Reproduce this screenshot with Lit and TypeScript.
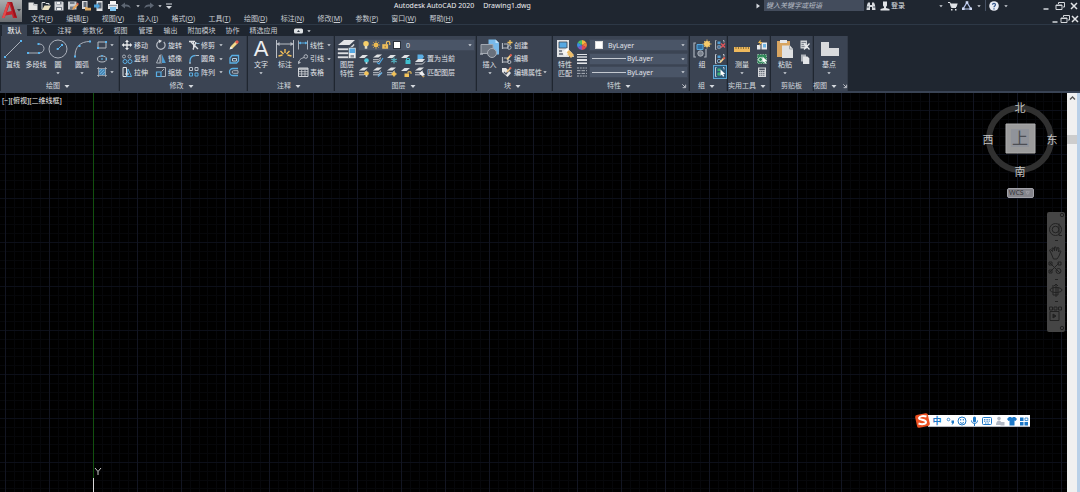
import { LitElement, html, svg, css, nothing } from "lit";
import { customElement, state } from "lit/decorators.js";
import { classMap } from "lit/directives/class-map.js";

/* Small glyphs, drawn on a 12 x 12 board. */
const small: Record<string, unknown> = {
  caret: svg`<path d="M3.500 5h5L6 8z" fill="#d5d9df"/>`,
  newFile: svg`<path d="M1.500 2.500h5l1 1.500h3V10h-9z" fill="#e4e4e4"/><path d="M6.500 2.500V5H10" stroke="#8b9099" fill="none" stroke-width=".7"/>`,
  open: svg`<path d="M2 9.500V2.500h3l1 1h3V5" fill="none" stroke="#d9dbde"/><path d="M2 10l2.500-4.500H11L8.500 10z" fill="#e9dfbf"/>`,
  save: svg`<path d="M1.500 1.500h8l1 1v8h-9z" fill="#d4d6da"/><path d="M3.500 1.500h5v3h-5zM3 7h6v3.500H3z" fill="#79808b"/><path d="M4 2h3v2H4zM4 8h4v2H4z" fill="#f2f2f2"/>`,
  saveAs: svg`<path d="M1 1.500h8.500v8H1z" fill="#c9ccd1"/><path d="M3 1.500h4.500v2.500H3zM3 6.500h5v3H3z" fill="#747b86"/><path d="M5 10l1-2.500 4-4 1.500 1.500-4 4z" fill="#e8a25a"/><path d="M9.500 3.500l1-1L12 4l-1 1z" fill="#dd5750"/>`,
  mobileOpen: svg`<path d="M2 1h5.500v8H2z" fill="#d8d9dc"/><path d="M3.500 2h3v5h-3z" fill="#646c78"/><path d="M5 10.500V7h2l.5.800H11v2.700z" fill="#dca862"/>`,
  mobileSave: svg`<path d="M3.500 1h6v10h-6z" fill="#dfe1e4"/><path d="M5 2.500h3.500v6H5z" fill="#5b6674"/><path d="M1 4.500h3V3l3 3-3 3V7.500H1z" fill="#4ea3dc"/>`,
  print: svg`<path d="M3 1h6v3H3z" fill="#f4f4f4"/><path d="M1 4h10v5H1z" fill="#dfe2e6"/><path d="M3 7h6v4H3z" fill="#7fc2ee"/><path d="M2 5h8v1H2z" fill="#949ba6"/>`,
  undo: svg`<path d="M1 5.500L5 2.500v2c4 0 5.500 1.500 5.500 4C9.500 7 8 6.600 5 6.600v2z" fill="#5d6673"/>`,
  redo: svg`<path d="M11 5.500L7 2.500v2c-4 0-5.500 1.500-5.500 4C2.500 7 4 6.600 7 6.600v2z" fill="#5d6673"/>`,
  more: svg`<path d="M3 3.500h6v1H3zM3 6h6L6 9z" fill="#d5d9df"/>`,
  play: svg`<path d="M4.500 3.500v5L8 6z" fill="#d5d9df"/>`,
  binoculars: svg`<path d="M2 5l1-2.500h2V5h2V2.500h2L10 5l.5 5H7V7H5v3H1.500z" fill="#d7dade"/><path d="M3 6v2M9 6v2" stroke="#4f5865"/>`,
  person: svg`<path d="M4 1.500h4v4L7 7v1l3.500 1v1.500h-9V9L5 8V7L4 5.500z" fill="#e2e4e7"/>`,
  cart: svg`<path d="M1 2.500h2l1.500 5H9" fill="none" stroke="#dfe2e6"/><path d="M3.200 3.500h7.500L9.500 7H4.500z" fill="#dfe2e6"/><path d="M4 9h1.500v1.500H4zM8 9h1.500v1.500H8z" fill="#dfe2e6"/>`,
  apps: svg`<path d="M6 2.500L10 9H2z" fill="none" stroke="#b3c3ea" stroke-width="1.200"/><path d="M4.700 1.200h2.600v2.600H4.700zM1 7.500h2.600V10H1zM8.500 7.500H11V10H8.500z" fill="#cdd8f2"/>`,
  help: svg`<circle cx="6" cy="6" r="4.800" fill="#e9edf4"/><path d="M4.500 4.800c0-2 3-2 3 0C7.500 6 6 6 6 7.300M6 8.200v1.200" stroke="#35598f" stroke-width="1.200" fill="none"/>`,
  min: svg`<path d="M3.500 9h5" stroke="#d5d8dc" stroke-width="1.500"/>`,
  restore: svg`<path d="M4.500 4V2.500h6v4.500H9M2 5h6v4.500H2z" fill="none" stroke="#d5d8dc"/><path d="M2 5.500h6" stroke="#d5d8dc"/>`,
  close: svg`<path d="M3 3l6 6M9 3l-6 6" stroke="#e1e3e6" stroke-width="1.500"/>`,
  ribbonMode: svg`<rect x="1" y="3.500" width="9" height="5" rx="1.500" fill="#dfe2e5"/><path d="M4 7l1.500-2L7 7z" fill="#333c48"/>`,
  rect: svg`<path d="M2 3h8v6H2z" fill="none" stroke="#b5bac2"/><path d="M1 8h2v2H1zM9 2h2v2H9z" fill="#59b4ef"/>`,
  ellipse: svg`<ellipse cx="6" cy="6" rx="4.500" ry="3" fill="none" stroke="#b5bac2"/><path d="M5.200 5.200h1.600v1.600H5.200zM9.500 5.200H11v1.600H9.500zM5.200 2h1.600v1.500H5.200z" fill="#59b4ef"/>`,
  hatch: svg`<path d="M3 3h6.500v6H3z" fill="#4787b5"/><path d="M2.500 1v10M9.500 1v10M1 2.500h10M1 9.500h10" stroke="#b5bac2" stroke-width=".7"/><path d="M4 8l4-4M3 6l3-3M6 9l3-3" stroke="#8cc8ee" stroke-width=".6"/>`,
  move: svg`<path d="M6 2v8M2 6h8" stroke="#e8eaed" stroke-width="1.300"/><path d="M6 .7L8 3H4zM6 11.300L8 9H4zM.7 6L3 4v4zM11.300 6L9 4v4z" fill="#e8eaed"/>`,
  rotate: svg`<path d="M8.800 3a4.200 4.200 0 1 1-4.500-.800" fill="none" stroke="#b8bdc6" stroke-width="1.200"/><path d="M3.500.500l3.500 1.300-2.600 2.500z" fill="#d8dbe0"/>`,
  trim: svg`<path d="M1 2.500h6" stroke="#dfe2e6" stroke-width="1.500"/><path d="M3 3l7 7M8 3L5 10.500" stroke="#dfe2e6" stroke-width="1.400"/><path d="M5.500 2v8.500" stroke="#dfe2e6"/><path d="M8 4.500h3.500" stroke="#8bb5d0"/>`,
  pencil: svg`<path d="M2 10l1-3 5-5 2 2-5 5z" fill="#f2d789"/><path d="M7 3l2-2 2 2-2 2z" fill="#e25a4e"/><path d="M1.500 10.500l1-3L5 9.500z" fill="#f1f1f1"/>`,
  copy: svg`<circle cx="3" cy="3.500" r="1.500" fill="none" stroke="#a9b0ba"/><circle cx="8.500" cy="3.500" r="1.500" fill="none" stroke="#a9b0ba"/><circle cx="4" cy="8.500" r="2" fill="none" stroke="#59aee4"/><circle cx="9" cy="8.500" r="2" fill="none" stroke="#59aee4"/>`,
  mirror: svg`<path d="M5 2v8H1.500z" fill="none" stroke="#a9b0ba"/><path d="M7 1.500L10.800 10H7z" fill="#4c9bd0"/><path d="M6 1v10" stroke="#dfe2e6" stroke-width=".5"/>`,
  fillet: svg`<path d="M2 10.500V8c0-3.500 2-5.500 5.500-5.500" fill="none" stroke="#59aee4" stroke-width="1.300"/><path d="M2 11V9M7.500 2.500H11" stroke="#b5bac2"/>`,
  explode: svg`<path d="M2 5l2-2.500h6.500V8L8.500 10H2z" fill="none" stroke="#59aee4" stroke-width="1.300"/><path d="M4.500 5.500h4V8h-4z" fill="none" stroke="#b5cfe2"/>`,
  stretch: svg`<path d="M2 1.500h3.500v9H2z" fill="none" stroke="#dfe2e6"/><path d="M7 3l3.500 7.500H6z" fill="none" stroke="#59aee4"/><path d="M4 8h4" stroke="#dfe2e6"/>`,
  scale: svg`<path d="M1.500 2V1.500h9v9H6" fill="none" stroke="#a9b0ba"/><path d="M1.500 6h4.500v4.500H1.500z" fill="none" stroke="#59aee4" stroke-width="1.200"/><path d="M6.500 5.500L9 3" stroke="#a9b0ba"/>`,
  array: svg`<path d="M1.500 1.500h3v3h-3zM7 1.500h3v3H7z" fill="none" stroke="#b9c0ca"/><path d="M1.500 7h3v3h-3zM7 7h3v3H7z" fill="none" stroke="#59aee4"/>`,
  offset: svg`<path d="M10 2.500H5a3.500 3.500 0 0 0 0 7h5" fill="none" stroke="#59aee4" stroke-width="1.300"/><path d="M10 4.700H5.500a1.300 1.300 0 0 0 0 2.600H10z" fill="none" stroke="#a9b0ba"/>`,
  linear: svg`<path d="M1.500 1.500v9M10.500 1.500v9" stroke="#a9b0ba"/><path d="M2 4h8" stroke="#59aee4"/><path d="M1.700 4l2.300-1.500v3zM10.300 4L8 2.500v3z" fill="#59aee4"/>`,
  leader: svg`<path d="M1.500 10.500c1-5 3-5 5.500-6" fill="none" stroke="#b5bac2"/><path d="M1 8l.2 3.200L4 9.500z" fill="#b5bac2"/><circle cx="8.800" cy="3.500" r="1.800" fill="none" stroke="#b5bac2"/>`,
  table: svg`<path d="M1.500 2h9.500v8.500H1.500z" fill="none" stroke="#d0d3d8"/><path d="M1.500 3h9.500" stroke="#d0d3d8" stroke-width="1.500"/><path d="M1.500 5.700H11M1.500 8H11M4.700 4v6M8 4v6" stroke="#d0d3d8" stroke-width=".8"/>`,
  bulb: svg`<circle cx="6" cy="4.500" r="3.300" fill="#f6cf6a"/><path d="M4.500 7h3v3.500h-3z" fill="#e3dcc4"/>`,
  sun: svg`<circle cx="6" cy="6" r="2.800" fill="#f6c555"/><path d="M6 1v10M1 6h10M2.600 2.600l6.800 6.800M9.400 2.600L2.600 9.400" stroke="#e6b451" stroke-width=".9"/>`,
  unlock: svg`<path d="M1.500 5h7v5.500h-7z" fill="#f0bf5c"/><path d="M6.500 5.500v-2a2 2 0 0 1 4 0v2.500" fill="none" stroke="#f0bf5c" stroke-width="1.400"/><path d="M5 7v2" stroke="#735a2b"/>`,
  insertSmall: svg`<path d="M1.500 4v6M1 9h6M3 5h4v4" fill="none" stroke="#b5bac2" stroke-width="1.200"/><circle cx="8.300" cy="8.500" r="1.800" fill="none" stroke="#b5bac2"/><path d="M9 1v5M6.500 3.500h5" stroke="#f0c15e" stroke-width="1.300"/>`,
  editBlock: svg`<path d="M1.500 4v6M1 9h6M3 5h4v4" fill="none" stroke="#b5bac2" stroke-width="1.200"/><circle cx="8.300" cy="9" r="1.600" fill="none" stroke="#b5bac2"/><path d="M6 6.500l4-4.500" stroke="#f0d08a" stroke-width="1.800"/><path d="M9 3l1.500-1.700" stroke="#e25a4e" stroke-width="2"/>`,
  editAttr: svg`<path d="M1 2h4l5 5-3.500 4L1 6z" fill="#e6e6e6"/><path d="M3 6l2 2 5-6" fill="none" stroke="#4a5261" stroke-width="1.200"/><path d="M6 6l3.500-4" stroke="#e9c07e" stroke-width="1.600"/><path d="M9 2.500l1-1.200" stroke="#e25a4e" stroke-width="2"/>`,
  wheel: svg`<path d="M6 6V1a5 5 0 0 1 4.300 2.500z" fill="#f4b63e"/><path d="M6 6l4.300-2.500a5 5 0 0 1 0 5z" fill="#ef7a3a"/><path d="M6 6l4.300 2.500A5 5 0 0 1 6 11z" fill="#dd4a54"/><path d="M6 6v5a5 5 0 0 1-4.300-2.500z" fill="#8457c4"/><path d="M6 6L1.700 8.500a5 5 0 0 1 0-5z" fill="#3a8fe0"/><path d="M6 6L1.700 3.500A5 5 0 0 1 6 1z" fill="#4cbf63"/>`,
  weights: svg`<path d="M1 1.500h10" stroke="#e2e4e7"/><path d="M1 4h10" stroke="#e2e4e7" stroke-width="1.400"/><path d="M1 7h10" stroke="#e2e4e7" stroke-width="2"/><path d="M1 10.200h10" stroke="#e2e4e7" stroke-width="1.600"/>`,
  dashes: svg`<path d="M1 2h10M1 10h10" stroke="#aab0b9" stroke-dasharray="2 .8"/><path d="M1 4.700h10M1 7.400h10" stroke="#aab0b9" stroke-dasharray="3.500 1"/>`,
  ungroup: svg`<path d="M2.500 1.500H1.500v9h1M9 1.500h1v2" fill="none" stroke="#a9b0ba"/><circle cx="5" cy="8" r="1.800" fill="#4a78a0" stroke="#a9b0ba" stroke-width=".6"/><path d="M3.500 2.500h3v2.500h-3z" fill="#4f9ed6"/><path d="M7 4.500l4 4M11 4.500l-4 4" stroke="#e0555a" stroke-width="1.400"/>`,
  groupEdit: svg`<path d="M2.500 1.500H1.500v9h1M9 1.500h1v2" fill="none" stroke="#c5cad2"/><path d="M3.500 2.500h3v2.500h-3z" fill="#4f9ed6"/><circle cx="5" cy="8" r="1.700" fill="none" stroke="#7fa7c6"/><path d="M6 9.500L10 5" stroke="#f0cf8d" stroke-width="1.800"/><path d="M9.300 6L10.800 4.300" stroke="#e25a4e" stroke-width="1.800"/>`,
  groupSelect: svg`<path d="M2.500 1.500H1.500v9h1M9 1.500h1v2" fill="none" stroke="#c5cad2"/><path d="M3.500 2.500h3v2.500h-3z" fill="#3fae74"/><circle cx="5" cy="8" r="1.800" fill="#3fae74"/><path d="M6.500 3.500v6.200l1.500-1.200 1 2.200 1.200-.6-1-2.100h2z" fill="#fff"/>`,
  quickCalc: svg`<path d="M2 1.500h8v9.500H2z" fill="#d7d9dc"/><path d="M3.200 2.500h5.600v1.700H3.200z" fill="#4a5261"/><path d="M3.200 5.500h5.600M3.200 7.300h5.600M3.200 9.200h5.600" stroke="#4a5261" stroke-dasharray="1.200 .8"/>`,
  quickSelect: svg`<path d="M5.500 3.500h5.500v7H5.500z" fill="#e8eaed"/><path d="M7 5h3v3.500H7z" fill="#6db5e6"/><path d="M1 6h3.500v4.500H1z" fill="#e8eaed"/><path d="M4.500.500L2 4h2l-1 3 3.500-4h-2z" fill="#f4bd4d"/>`,
  selectAll: svg`<path d="M1.500 1.500h9v9h-9z" fill="#2f8a5a" stroke="#a7c9b6" stroke-width=".7" stroke-dasharray="1.500 1"/><circle cx="4.500" cy="6.500" r="2" fill="none" stroke="#d7e6dd"/><path d="M6.500 3.500v6.200l1.500-1.200 1 2.200 1.200-.6-1-2.100h2z" fill="#fff"/>`,
  cut: svg`<path d="M1.500 1.500h6.500v8h-6.500z" fill="#cfd2d6"/><path d="M2.500 3.500h4.500M2.500 5.500h4.500M2.500 7.500h3" stroke="#68707c" stroke-width=".8"/><path d="M5 4.500l5.500 6M10.500 4.500L5 10.500" stroke="#eef0f2" stroke-width="1.200"/>`,
  copyClip: svg`<path d="M2 1.500h5v7H2z" fill="#aeb3ba"/><path d="M4 3.500h4.500l1.800 1.800V11H4z" fill="#e3e5e8"/>`,
  launcher: svg`<path d="M3.500 3.500l4 4M8.500 4v4.500H4" fill="none" stroke="#cfd3d9" stroke-width="1.300"/>`,
};

/* Stack of sheets used by the layer tools; the accent glyph sits at its lower right. */
const sheets = svg`<path d="M1 4.500L5 1.500h5L6.500 4.500z" fill="#dfe1e4"/><path d="M1 6.700h5.500L9 4.700M1 8.800h5L8.500 7" fill="none" stroke="#c3c7cd"/>`;
const sheet = svg`<path d="M1 5l3.500-3H10L6.500 5z" fill="#dfe1e4"/>`;
const dot = (c: string) => svg`<circle cx="8.500" cy="7.500" r="2.300" fill=${c}/><path d="M7.700 9h1.600v2H7.700z" fill="#c9ced4"/>`;
Object.assign(small, {
  layOff: svg`${sheet}${dot("#4cc5d8")}`,
  layIso: svg`${sheets}<path d="M5 9.500l2 1.500 4-6" fill="none" stroke="#4fa7e0" stroke-width="1.200"/>`,
  layFreeze: svg`${sheet}<path d="M8 4.500v6M5.300 6l5.400 3M10.700 6L5.300 9" stroke="#56b5c4" stroke-width="1.200"/>`,
  layLock: svg`${sheet}<path d="M5.500 7h5v4h-5z" fill="#3fc0cf"/><path d="M6.500 7V5.500h3V7" fill="none" stroke="#3fc0cf"/>`,
  layCurrent: svg`<path d="M1 9l3-3h7L8.500 9z" fill="#dfe1e4"/><path d="M1 11h7.500l2.500-2.500" fill="none" stroke="#c3c7cd"/><path d="M3.500 1.500h5l1.500 2-1.500 2.500h-5z" fill="#5aaee4"/>`,
  layOn: svg`${sheets}${dot("#f4c45a")}`,
  layUniso: svg`${sheets}<path d="M6 10.500l4-4" stroke="#6fb4e4" stroke-width="1.500"/>`,
  layThaw: svg`${sheets}<circle cx="8" cy="8" r="2" fill="#f4c45a"/><path d="M8 5v6M5 8h6" stroke="#f4c45a" stroke-width=".8"/>`,
  layUnlock: svg`${sheet}<path d="M4.500 7.500h4.500V11H4.500z" fill="#f4c45a"/><path d="M8 7.500V5.800h3V8" fill="none" stroke="#f4c45a"/>`,
  layMatch: svg`${sheets}<path d="M5 7l3 3 3-1-3-4z" fill="#f0f0f0"/><path d="M8 10l1 1.500 2-1z" fill="#e9b45d"/>`,
});

/* Large glyphs, drawn on a 22 x 22 board. */
const large: Record<string, unknown> = {
  line: svg`<path d="M3 19L19 3" stroke="#aab0ba"/><path d="M2 18h2v2H2zM18 2h2v2h-2z" fill="#59b4ef"/>`,
  pline: svg`<path d="M2.500 15h12a4.500 4.500 0 0 0 0-9H13" fill="none" stroke="#aab0ba"/><path d="M2 14h2v2H2zM13 14h2v2h-2zM12.500 5h2v2h-2z" fill="#59b4ef"/>`,
  circle: svg`<circle cx="11" cy="11" r="9" fill="none" stroke="#aab0ba"/><path d="M10.500 11.500L15 7" stroke="#59b4ef"/><path d="M9.700 10h2v2h-2zM14 6h2v2h-2z" fill="#59b4ef"/>`,
  arc: svg`<path d="M4 18.500C4 9 9 3.500 19 3.500" fill="none" stroke="#aab0ba"/><path d="M3 17.500h2v2H3zM7.500 7h2v2h-2zM18 2.500h2v2h-2z" fill="#59b4ef"/>`,
  dim: svg`<path d="M2.500 2v18M19.500 2v18M3 6h16" stroke="#b9bec6"/><path d="M2.500 6l3-2v4zM19.500 6l-3-2v4z" fill="#b9bec6"/><path d="M4.500 18l4-1M6.500 13l3 3M11 11v4M15.500 13l-3 3M17.500 18l-4-1" stroke="#f4bf59" stroke-width="1.400"/>`,
  layers: svg`<path d="M2 7L8 2h11l-5.500 5z" fill="#e4e5e7"/><path d="M2 10.500h11l5-4.500v1.500L13.500 12H2zM2 14.500h11l4-4v1.500l-4 4H2zM2 18.500h11v1.500H2z" fill="#dcdee1" stroke="#dcdee1" stroke-width=".4"/><path d="M12.500 9.500h7.500v11h-7.500z" fill="#e9ebed" stroke="#3b4453" stroke-width=".6"/><path d="M13.500 10.500h5.500v4.500h-5.500z" fill="#56a8e2"/><path d="M14.500 17h3.500v2.500h-3.500z" fill="#8b929d"/>`,
  insert: svg`<path d="M9.500 1.500h7L20 5v11.500H9.500z" fill="#78b9ea"/><path d="M16.500 1.500V5H20" fill="#c4e1f6"/><path d="M2 6.500h12v9H2z" fill="#6d7580" stroke="#a3a9b2"/><circle cx="13" cy="15" r="4.500" fill="#69717c" stroke="#a9afb8"/><path d="M1 16h3" stroke="#a9afb8" stroke-width="1.500"/>`,
  match: svg`<path d="M3 2h12v17H3z" fill="#e0e2e4"/><path d="M5 4h8v6H5z" fill="#56a8e2" stroke="#3e4653" stroke-width=".8"/><path d="M5 13h3M5 16h4" stroke="#5d6571" stroke-width="1.500"/><path d="M10 13l3-3 5 5 2 4-4-1z" fill="#fff"/><path d="M12 15l3-3 5 5-3 3z" fill="#edbd69"/><path d="M8 14l3-2 3 4-3 2z" fill="#f4f4f4"/>`,
  group: svg`<path d="M5 5H3v14h2M13 19h2v-8" fill="none" stroke="#a9b0ba" stroke-width="1.200"/><path d="M6 6.500h6v5H6z" fill="#316d9d" stroke="#58a9e0"/><circle cx="9.500" cy="15.500" r="2.700" fill="#79818d" stroke="#a9b0ba"/><circle cx="16" cy="6" r="3" fill="#f7cf6d"/><path d="M16 1.500v9M11.500 6h9M13 3l6 6M19 3l-6 6" stroke="#f4c668" stroke-width=".8"/>`,
  measure: svg`<path d="M3 9h16v5H3z" fill="#eeb95d"/><path d="M5 9v2M7.500 9v2M10 9v2M12.500 9v2M15 9v2M17.500 9v2" stroke="#7c622f" stroke-width=".8"/>`,
  paste: svg`<path d="M3 3h13v16H3z" fill="#d8a561"/><path d="M6 2h7v3H6z" fill="#e6e7e9"/><path d="M8 7.500h8L19 11v9H8z" fill="#dfe1e3"/><path d="M15.500 7.500V11H19" fill="none" stroke="#a0a5ac"/>`,
  base: svg`<path d="M3 4h8v6h10v8H3z" fill="#d9dadc"/>`,
};

const icon = (name: string, extra = "") =>
  html`<svg class="ico ${extra}" viewBox="0 0 12 12" aria-hidden="true">${small[name]}</svg>`;
const bigIcon = (name: string) =>
  name === "text"
    ? html`<span class="letter">A</span>`
    : html`<svg class="big-ico" viewBox="0 0 22 22" aria-hidden="true">${large[name]}</svg>`;

const MENUS: [string, string][] = [
  ["文件", "F"], ["编辑", "E"], ["视图", "V"], ["插入", "I"], ["格式", "O"], ["工具", "T"],
  ["绘图", "D"], ["标注", "N"], ["修改", "M"], ["参数", "P"], ["窗口", "W"], ["帮助", "H"],
];
const TABS = ["默认", "插入", "注释", "参数化", "视图", "管理", "输出", "附加模块", "协作", "精选应用"];

@customElement("app-root")
export class AppRoot extends LitElement {
  @state() private tab = "默认";

  static styles = css`
    :host {
      display: flex; flex-direction: column; height: 100vh; overflow: hidden;
      background: #1f2630; color: #e0e3e8;
      font: 7px/9px "Noto Sans", "Noto Sans CJK SC", sans-serif;
    }
    * { box-sizing: border-box; }
    button, input, select {
      font: inherit; color: inherit; background: none; border: 0; margin: 0; padding: 0;
      border-radius: 0; white-space: nowrap;
    }
    select { appearance: none; outline: none; }
    .ico { width: 12px; height: 12px; flex: none; display: block; }
    .caret { width: 8px; height: 8px; }
    .big-ico { width: 22px; height: 22px; display: block; }

    .head { display: flex; flex: none; height: 24px; }
    .logo {
      width: 22px; height: 22px; flex: none; display: flex;
      background: linear-gradient(#a9abad, #6c6f73);
    }
    .logo svg { width: 22px; height: 22px; }
    .bars { flex: 1; min-width: 0; }
    .title-bar { display: flex; align-items: center; height: 11px; }
    .quick { display: flex; align-items: center; padding-left: 4px; }
    .quick button { width: 13px; height: 11px; display: flex; justify-content: center; align-items: center; }
    .quick button.slim { width: 9px; }
    .quick button.wide { width: 14px; }
    .title { flex: 1; display: flex; justify-content: center; gap: 9px; font-size: 7px; color: #eceef1; white-space: pre; }
    .right { display: flex; align-items: center; }
    .right button { display: flex; align-items: center; height: 11px; }
    .search { width: 100px; height: 11px; background: #434c5c; padding: 0 2px; font-style: italic; outline: none; }
    .search::placeholder { color: #b8bec7; opacity: 1; }
    .account { gap: 2px; margin-left: 1px; }
    .login { width: 58px; }
    .tools { display: flex; align-items: center; gap: 2px; }
    .sep { width: 1px; height: 11px; background: #465163; }
    .wins { display: flex; gap: 2px; }
    .title-bar .wins { margin-left: 30px; }
    .menu-bar .wins { gap: 0; margin-left: auto; }
    .menu-bar .wins button { width: 10px; display: flex; justify-content: center; }
    .menu-bar { display: flex; align-items: center; height: 13px; padding-left: 9px; color: #c9cdd3; margin-top: 1px; }
    .menus { display: flex; justify-content: space-between; width: 422px; }
    u { text-underline-offset: 1px; text-decoration-thickness: 1px; }

    .tabs { display: flex; align-items: stretch; flex: none; height: 12px; padding-left: 2px; border-top: 1px solid #2d3846; color: #c9cdd3; }
    .tabs button { width: 25px; height: 11px; text-align: center; }
    .tabs .three { width: 31px; }
    .tabs .four { width: 37px; }
    .tabs .on { background: #3b4453; color: #fff; }
    .tabs .mode { display: flex; align-items: center; width: 31px; justify-content: flex-end; }

    .ribbon { display: flex; gap: 1px; flex: none; height: 57px; padding-left: 1px; border-bottom: 2px solid #394354; }
    .panel { display: flex; flex-direction: column; background: #3b4453; flex: none; border-right: 1px solid #333b48; }
    .body { display: flex; height: 44px; padding: 2px 0 0 1px; }
    .foot { display: flex; justify-content: center; align-items: center; height: 11px; color: #d5d9de; gap: 1px; }
    .foot .end { margin-left: auto; }
    .foot.spread::before { content: ""; margin-right: auto; width: 8px; }
    .foot button { display: flex; align-items: center; gap: 1px; }
    .big { width: 24px; height: 41px; display: flex; flex-direction: column; align-items: center; }
    .big.narrow { width: 20px; }
    .big.first { width: 22px; }
    .big.broad { width: 28px; }
    .letter { height: 22px; font: 22px/22px "Liberation Sans", sans-serif; color: #eceef0; }
    .grid { display: grid; grid-template-rows: 14px 13px 14px; align-items: center; justify-items: start; }
    .grid button { display: flex; align-items: center; gap: 1px; }
    .draw { grid-template-columns: 12px 8px; }
    .modify { grid-template-columns: 34px 33px 29px 11px 14px; }
    .annotate { grid-template-columns: 28px 8px; }
    .block { grid-template-columns: 40px 10px; }
    .single { grid-template-columns: 14px; justify-items: center; }
    .selected { background: #2d5878; outline: 1px solid #5aa6d6; }

    .p-draw { width: 118px; }
    .p-modify { width: 127px; }
    .p-annotate { width: 86px; }
    .p-layer { width: 141px; }
    .p-block { width: 75px; }
    .p-prop { width: 136px; }
    .p-group { width: 37px; }
    .p-util { width: 42px; }
    .p-clip { width: 42px; }
    .p-view { width: 34px; }
    .rows { display: grid; grid-template-rows: 14px 13px 14px; align-items: center; flex: 1; min-width: 0; }
    .tool-row { display: flex; gap: 2px; align-items: center; }
    .tool-row button { display: flex; align-items: center; gap: 1px; width: 12px; }
    .tool-row .labelled { width: auto; }
    .combo { display: flex; align-items: center; height: 12px; background: #4a5567; min-width: 0; border: 1px solid #3f4858; padding-left: 2px; }
    .combo select { flex: 1; min-width: 0; height: 10px; padding-left: 5px; }
    .combo .ico { width: 10px; height: 10px; }
    .combo .caret { width: 8px; }
    .swatch { width: 8px; height: 8px; background: #fff; border: 1px solid #2b323c; flex: none; margin-left: 2px; }
    .prop-row { display: flex; align-items: center; gap: 1px; }
    .prop-row .combo { flex: 1; }
    .prop-row .swatch { margin-left: 3px; border-color: #ddd; }
    .stroke { width: 34px; height: 1px; background: #c4c9d0; flex: none; }
    .combo .stroke + select { padding-left: 1px; }

    .work { position: relative; flex: 1; min-height: 0; display: flex; background: #000; }
    .canvas {
      position: relative; flex: 1; overflow: hidden; color: #f0f0f0;
      background-image:
        linear-gradient(90deg, #121521 1px, transparent 1px),
        linear-gradient(#0c0f19 1px, transparent 1px),
        linear-gradient(90deg, transparent 9px, #06070a 9px 10px, transparent 10px 18px, #06070a 18px 19px, transparent 19px 26px, #06070a 26px 27px, transparent 27px 35px, #06070a 35px 36px, transparent 36px),
        linear-gradient(transparent 9px, #06070a 9px 10px, transparent 10px 18px, #06070a 18px 19px, transparent 19px 26px, #06070a 26px 27px, transparent 27px 35px, #06070a 35px 36px, transparent 36px);
      background-size: 44px 44px;
      background-position: 5px 17px;
    }
    .view-label { padding: 3px 2px; }
    .axis { position: absolute; left: 93px; top: 0; bottom: 14px; width: 1px; background: #12500f; }
    .axis-base { position: absolute; left: 93px; bottom: 0; width: 1px; height: 14px; background: #d8d8d8; }
    .axis-name { position: absolute; left: 94px; bottom: 16px; width: 8px; height: 9px; }
    .compass { position: absolute; right: 8px; top: 4px; width: 78px; height: 88px; }
    .compass text { font: 11px "Noto Sans CJK SC", sans-serif; fill: #c2c2c2; text-anchor: middle; }
    .compass .up { font-size: 16px; fill: #4c4e54; }
    .wcs { position: absolute; right: 33px; top: 95px; width: 27px; height: 10px; border-radius: 2px; background: #85858c; color: #35353a; display: flex; align-items: center; justify-content: space-between; padding: 0 1px; border: 1px solid #a3a3aa; font: 7px/8px "Noto Sans", sans-serif; }
    .nav { position: absolute; right: 2px; top: 119px; width: 18px; height: 120px; }
    .scroll { width: 10px; background: #f0f0f0; display: flex; flex-direction: column; gap: 32px; }
    .scroll svg { width: 10px; height: 10px; }
    .thumb { height: 9px; background: #cdcdcd; }
    .edge { width: 3px; background: #b9d0e8; }
    .ime { position: absolute; right: 50px; bottom: 65px; height: 12px; width: 102px; background: #fff; display: flex; align-items: center; padding-left: 3px; color: #1d78c8; border-bottom: 1px solid #b9bdc4; }
    .ime svg { width: 100%; height: 12px; display: block; }
    .ime .zh { font: 700 9px/11px "Noto Sans CJK SC", sans-serif; width: 12px; flex: none; text-align: center; }
    .ime .badge { position: absolute; left: -14px; top: -3px; width: 17px; height: 17px; }
  `;

  private btn(name: string, label: string, cls = "") {
    return html`<button class=${cls} aria-label=${label}>${icon(name)}</button>`;
  }
  private more(label = "更多") {
    return html`<button aria-label=${label}>${icon("caret", "caret")}</button>`;
  }
  private tool(name: string, label: string) {
    return html`<button class="labelled">${icon(name)}<span>${label}</span></button>`;
  }
  private big(name: string, lines: string[], caret = false, cls = "") {
    return html`<button class="big ${cls}">
      ${bigIcon(name)}${lines.map((l) => html`<span>${l}</span>`)}${caret ? icon("caret", "caret") : nothing}
    </button>`;
  }
  private panel(cls: string, title: string, body: unknown, caret = true, launcher = false) {
    return html`<section class="panel ${cls}" aria-label=${title}>
      <div class="body">${body}</div>
      <div class="foot ${launcher ? "spread" : ""}">
        <button>${title}${caret ? icon("caret") : nothing}</button>
        ${launcher ? html`<button class="end" aria-label="设置">${icon("launcher", "caret")}</button>` : nothing}
      </div>
    </section>`;
  }

  private renderRibbon() {
    return html`<div class="ribbon">
      ${this.panel("p-draw", "绘图", html`
        ${this.big("line", ["直线"], false, "first")}${this.big("pline", ["多段线"])}
        ${this.big("circle", ["圆"], true, "narrow")}${this.big("arc", ["圆弧"], true, "broad")}
        <div class="grid draw">
          ${this.btn("rect", "矩形")}${this.more()}${this.btn("ellipse", "椭圆")}${this.more()}
          ${this.btn("hatch", "图案填充")}${this.more()}
        </div>`)}
      ${this.panel("p-modify", "修改", html`
        <div class="grid modify">
          ${this.tool("move", "移动")}${this.tool("rotate", "旋转")}${this.tool("trim", "修剪")}${this.more()}${this.btn("pencil", "删除")}
          ${this.tool("copy", "复制")}${this.tool("mirror", "镜像")}${this.tool("fillet", "圆角")}${this.more()}${this.btn("explode", "分解")}
          ${this.tool("stretch", "拉伸")}${this.tool("scale", "缩放")}${this.tool("array", "阵列")}${this.more()}${this.btn("offset", "偏移")}
        </div>`)}
      ${this.panel("p-annotate", "注释", html`
        ${this.big("text", ["文字"], true)}${this.big("dim", ["标注"])}
        <div class="grid annotate">
          ${this.tool("linear", "线性")}${this.more()}${this.tool("leader", "引线")}${this.more()}
          ${this.tool("table", "表格")}
        </div>`)}
      ${this.panel("p-layer", "图层", html`
        ${this.big("layers", ["图层", "特性"], false, "first")}
        <div class="rows">
          <div class="combo">
            ${icon("bulb")}${icon("sun")}${icon("unlock")}<span class="swatch"></span>
            <select aria-label="图层"><option>0</option></select>${icon("caret", "caret")}
          </div>
          <div class="tool-row">
            ${this.btn("layOff", "关")}${this.btn("layIso", "隔离")}${this.btn("layFreeze", "冻结")}${this.btn("layLock", "锁定")}
            ${this.tool("layCurrent", "置为当前")}
          </div>
          <div class="tool-row">
            ${this.btn("layOn", "打开")}${this.btn("layUniso", "取消隔离")}${this.btn("layThaw", "解冻")}${this.btn("layUnlock", "解锁")}
            ${this.tool("layMatch", "匹配图层")}
          </div>
        </div>`)}
      ${this.panel("p-block", "块", html`
        ${this.big("insert", ["插入"], true)}
        <div class="grid block">
          ${this.tool("insertSmall", "创建")}<span></span>${this.tool("editBlock", "编辑")}<span></span>
          ${this.tool("editAttr", "编辑属性")}${this.more()}
        </div>`)}
      ${this.panel("p-prop", "特性", html`
        ${this.big("match", ["特性", "匹配"], false, "first")}
        <div class="rows">
          <div class="prop-row">${icon("wheel")}
            <div class="combo"><span class="swatch"></span><select aria-label="颜色"><option>ByLayer</option></select>${icon("caret", "caret")}</div></div>
          <div class="prop-row">${icon("weights")}
            <div class="combo"><span class="stroke"></span><select aria-label="线宽"><option>ByLayer</option></select>${icon("caret", "caret")}</div></div>
          <div class="prop-row">${icon("dashes")}
            <div class="combo"><span class="stroke"></span><select aria-label="线型"><option>ByLayer</option></select>${icon("caret", "caret")}</div></div>
        </div>`, true, true)}
      ${this.panel("p-group", "组", html`
        ${this.big("group", ["组"], false, "first")}
        <div class="grid single">${this.btn("ungroup", "解除编组")}${this.btn("groupEdit", "组编辑")}${this.btn("groupSelect", "组选择", "selected")}</div>`)}
      ${this.panel("p-util", "实用工具", html`
        ${this.big("measure", ["测量"], true, "broad")}
        <div class="grid single">${this.btn("quickSelect", "快速选择")}${this.btn("selectAll", "全部选择")}${this.btn("quickCalc", "快速计算器")}</div>`)}
      ${this.panel("p-clip", "剪贴板", html`
        ${this.big("paste", ["粘贴"], true, "broad")}
        <div class="grid single">${this.btn("cut", "剪切")}${this.btn("copyClip", "复制")}</div>`, false)}
      ${this.panel("p-view", "视图", html`${this.big("base", ["基点"], true, "broad")}`, true, true)}
    </div>`;
  }

  private renderHead() {
    const wins = html`<div class="wins">${this.btn("min", "最小化")}${this.btn("restore", "还原")}${this.btn("close", "关闭")}</div>`;
    return html`<header class="head">
      <button class="logo" aria-label="应用程序菜单">
        <svg viewBox="0 0 22 22"><path d="M2 18L7.500 2h4.500l5 16h-4l-1-3.500-6.500 1L4.500 18z" fill="#c3202b"/><path d="M7 12l2.500-7.500 2 6.500z" fill="#8f9194"/><path d="M2 18L7.500 2l1.500 2L4.500 18z" fill="#e44a4b"/><path d="M10 2h2l5 16-2.500-1z" fill="#9a141d"/><path d="M17 9h4l-2 2.500z" fill="#3a3d42"/></svg>
      </button>
      <div class="bars">
        <div class="title-bar">
          <div class="quick">
            ${this.btn("newFile", "新建")}${this.btn("open", "打开")}${this.btn("save", "保存", "wide")}${this.btn("saveAs", "另存为")}
            ${this.btn("mobileOpen", "从移动端打开")}${this.btn("mobileSave", "保存到移动端", "wide")}${this.btn("print", "打印")}
            ${this.btn("undo", "放弃", "wide")}<button class="slim" aria-label="放弃列表">${icon("caret", "caret")}</button>
            ${this.btn("redo", "重做")}<button class="slim" aria-label="重做列表">${icon("caret", "caret")}</button>
            ${this.btn("more", "自定义", "slim")}
          </div>
          <div class="title"><span>Autodesk AutoCAD 2020</span><span>Drawing1.dwg</span></div>
          <div class="right">
            ${this.btn("play", "搜索范围")}
            <input class="search" type="search" aria-label="搜索" placeholder="键入关键字或短语" />
            <div class="tools account">${this.btn("binoculars", "搜索")}<button class="login">${icon("person")}<span>登录</span></button></div>
            <div class="tools">
              ${this.more("账户")}${this.btn("cart", "商店")}${this.btn("apps", "应用")}${this.more()}
              <span class="sep"></span>${this.btn("help", "帮助")}${this.more()}
            </div>
            ${wins}
          </div>
        </div>
        <div class="menu-bar">
          <nav class="menus">${MENUS.map(([n, k]) => html`<button>${n}(<u>${k}</u>)</button>`)}</nav>
          ${wins}
        </div>
      </div>
    </header>`;
  }

  private renderWork() {
    return html`<main class="work">
      <div class="canvas">
        <div class="view-label">[−][俯视][二维线框]</div>
        <div class="axis"></div><div class="axis-base"></div>
        <svg class="axis-name" viewBox="0 0 8 9"><path d="M1 1l3 3.500L7 1M4 4.500V8" fill="none" stroke="#c8c8c8"/></svg>
        <svg class="compass" viewBox="0 -5 78 88">
          <circle cx="39" cy="37" r="31" fill="none" stroke="#303030" stroke-width="6"/>
          <path d="M25 22h29v29H25z" fill="#9b9b9b" stroke="#adadad"/><path d="M30 27h18v18H30z" fill="#90939a"/>
          <text x="39" y="10">北</text><text x="39" y="74">南</text><text x="7" y="42">西</text><text x="71" y="42">东</text>
          <text class="up" x="39" y="42">上</text>
        </svg>
        <button class="wcs">WCS<svg class="ico caret" viewBox="0 0 12 12"><path d="M3 4h5L5.500 8z" fill="none" stroke="#a9a9b0"/></svg></button>
        <svg class="nav" viewBox="0 0 18 120" fill="none" stroke="#222" stroke-width="1">
          <rect width="18" height="120" rx="2" fill="#454545" stroke="none"/>
          <circle cx="15" cy="3" r="1.700"/><circle cx="8.500" cy="17.500" r="6"/><circle cx="8.500" cy="17.500" r="3.300"/><path d="M12 11.500v12h3M8 28.500h3"/>
          <path d="M4 41l-1.500-3 1-.500 2 2L5 36h1.500l1 3V35H9l.5 4 1-3.500L12 36l-.5 4 1.500-1.500.8.800L12 44l-2 3H6.500z"/>
          <path d="M3 51l10 10M12 51L3 60M2 50h3v3H2zM11 50h3v3h-3zM2 58h3v3H2z"/><circle cx="11.500" cy="59" r="2.500"/><path d="M8 67.500h3"/>
          <path d="M9 72v13M7 74l2-2 2 2"/><ellipse cx="9" cy="78" rx="6" ry="2.500"/><path d="M6 73v10h5V75M8 89.500h3"/>
          <path d="M2.500 95h3v3h-3zM7 95h3v3H7zM11.500 95h3v3h-3zM3 99.500h9v9H3z"/><path d="M6 102v4l3-2z" fill="#222"/><circle cx="15" cy="116" r="1.700"/>
        </svg>
      </div>
      <div class="scroll"><svg viewBox="0 0 10 10"><path d="M3 6.500l2.500-2.500L8 6.500" fill="none" stroke="#555" stroke-width="1.300"/></svg><div class="thumb"></div></div>
      <div class="edge"></div>
      <div class="ime">
        <svg class="badge" viewBox="0 0 17 17"><rect x="2" y="2" width="13" height="13" rx="2" transform="rotate(-12 8.500 8.500)" fill="#ee5122"/><path d="M12.500 4.500c-3-1-7-.5-7.500 1.500s7 1.500 7 4-4.500 2.500-7.500 1.500" fill="none" stroke="#fff" stroke-width="2"/></svg>
        <span class="zh">中</span>
        <svg viewBox="0 0 86 12" fill="#1d78c8">
          <circle cx="5" cy="4.500" r="1.300" fill="none" stroke="#1d78c8" stroke-width=".8"/><path d="M8 5.500h2.500V8L9 9.500h-1L9 8H8z"/>
          <g fill="none" stroke="#1d78c8"><circle cx="18.500" cy="6" r="4"/><path d="M16.500 7.200c1 1.500 3 1.500 4 0M17.200 4v1.500M19.800 4v1.500"/></g>
          <rect x="29.500" y="1.500" width="3" height="6" rx="1.500"/><path d="M28 5.500c0 4 6 4 6 0M31 8.500v2.500" fill="none" stroke="#1d78c8"/>
          <rect x="39" y="2.500" width="9" height="7" rx="1" fill="none" stroke="#1d78c8"/><path d="M40.500 4.700h6M40.500 6.200h6M41.500 8h4" stroke="#1d78c8" stroke-dasharray="1 .6"/>
          <g fill="#b1b8c4"><circle cx="55.500" cy="3.500" r="1.800"/><path d="M52.500 10c0-6 6-6 6 0zM57 7h4v3.500h-4z"/></g>
          <path d="M65.500 2h2c.5 1 1.500 1 2 0h2l2 2-1.500 2-1-.5V10.500h-5V5.500l-1 .5-1.500-2z"/>
          <path d="M76.500 2.500h3.500v3.500h-3.500zM76.500 7h3.500v3.500h-3.500zM81 7h3.500v3.500H81z"/><path d="M81.500 3h2.800v2.600h-2.800z" fill="none" stroke="#1d78c8" stroke-width=".8"/>
        </svg>
      </div>
    </main>`;
  }

  render() {
    return html`
      ${this.renderHead()}
      <div class="tabs" role="tablist">
        ${TABS.map((t) => html`<button role="tab" aria-selected=${t === this.tab}
          class=${classMap({ on: t === this.tab, three: t.length === 3, four: t.length === 4 })}
          @click=${() => (this.tab = t)}>${t}</button>`)}
        <button class="mode" aria-label="功能区显示">${icon("ribbonMode")}${icon("caret", "caret")}</button>
      </div>
      ${this.renderRibbon()}
      ${this.renderWork()}
    `;
  }
}
